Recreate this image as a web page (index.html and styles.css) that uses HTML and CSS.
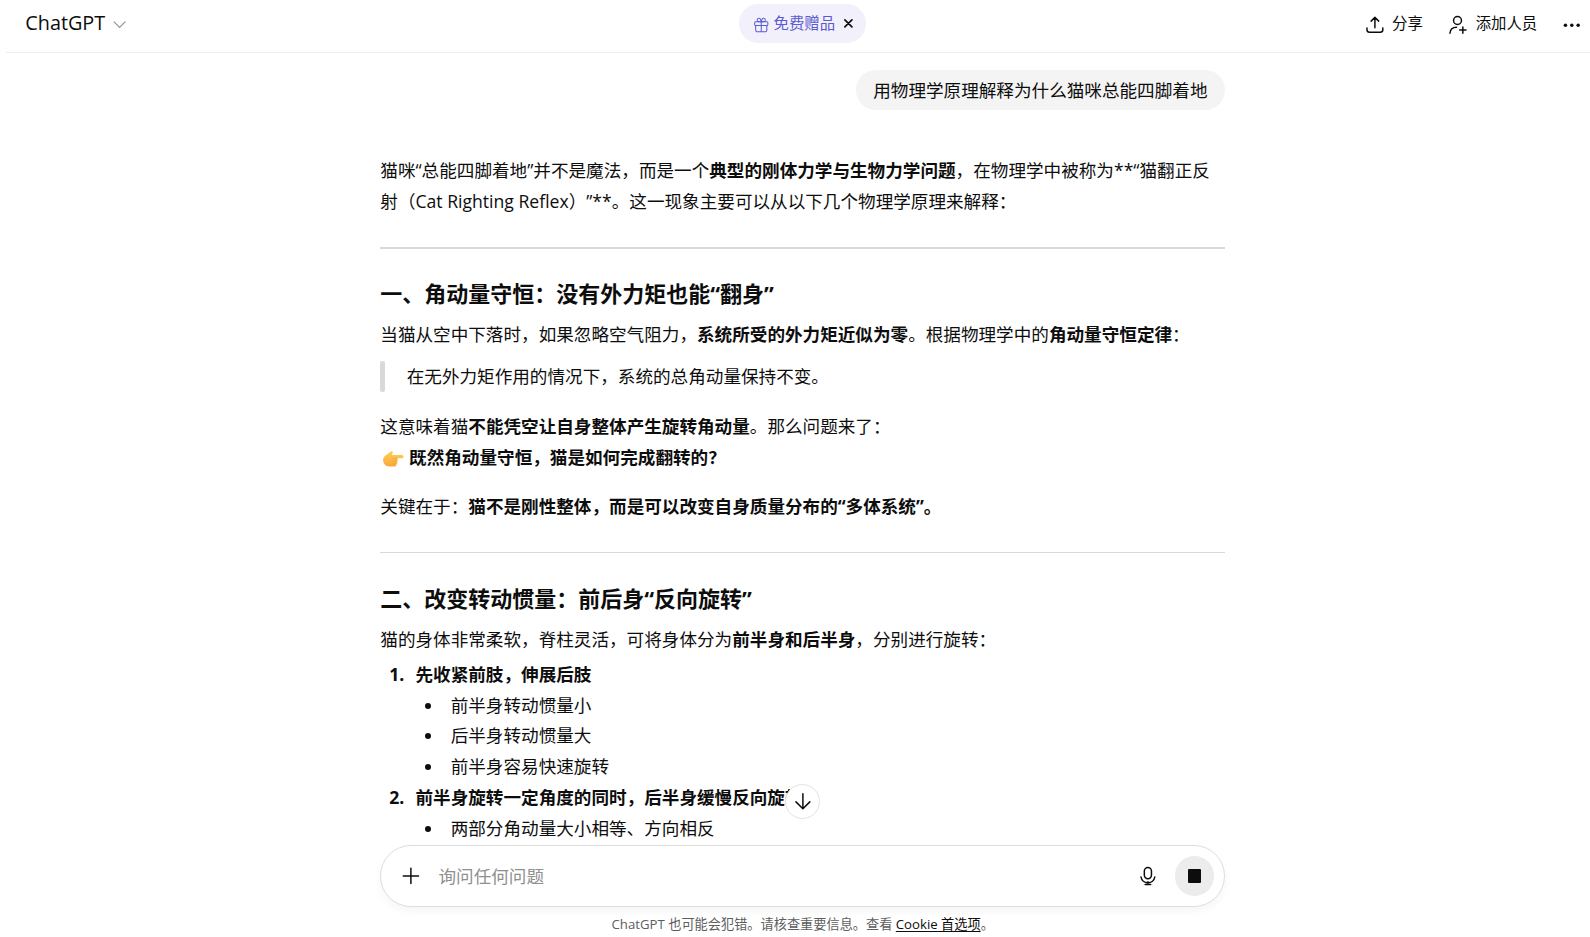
FILE: index.html
```html
<!DOCTYPE html>
<html lang="zh-CN">
<head>
<meta charset="utf-8">
<meta name="viewport" content="width=device-width, initial-scale=1">
<title>ChatGPT</title>
<link rel="stylesheet" href="styles.css">
</head>
<body>
<header class="topbar">
  <button class="model" type="button">ChatGPT
    <svg class="chevron" viewBox="0 0 12 12" aria-hidden="true"><path d="M1 3.500 6 8.500 11 3.500"/></svg>
  </button>
  <div class="gift">
    <button class="gift-link" type="button">
      <svg class="gift-icon" viewBox="0 0 16 16" aria-hidden="true"><rect x="1.600" y="4.600" width="12.800" height="3.600" rx="1"/><path d="M2.600 8.200v4.400a1.800 1.800 0 0 0 1.800 1.800h7.200a1.800 1.800 0 0 0 1.800-1.800V8.200M8 4.600v9.800M8 4.600H5.700a1.700 1.700 0 1 1 1.700-1.900L8 4.600l.6-1.900a1.700 1.700 0 1 1 1.700 1.900H8"/></svg>
      免费赠品
    </button>
    <button class="gift-close" type="button" aria-label="关闭"><svg viewBox="0 0 8 8" aria-hidden="true"><path d="M.8.8l6.400 6.400M7.200.8.8 7.200"/></svg></button>
  </div>
  <nav class="actions">
    <button class="action" type="button">
      <svg class="icon" viewBox="0 0 20 20" aria-hidden="true"><path d="M2 13v1.900a2.600 2.600 0 0 0 2.600 2.600h10.800a2.600 2.600 0 0 0 2.600-2.600V13M10 12.800V2.600M6.200 6.200 10 2.400l3.800 3.800"/></svg>
      分享
    </button>
    <button class="action" type="button">
      <svg class="icon" viewBox="0 0 20 20" aria-hidden="true"><circle cx="9.600" cy="5.600" r="4"/><path d="M2 18.400c.3-4 2.800-6 6.600-6M15 12v6.400M11.800 15.200h6.400"/></svg>
      添加人员
    </button>
    <button class="more" type="button" aria-label="更多"><svg viewBox="0 0 16 4" aria-hidden="true"><circle cx="2.200" cy="2" r="1.600"/><circle cx="8" cy="2" r="1.600"/><circle cx="13.800" cy="2" r="1.600"/></svg></button>
  </nav>
</header>

<main class="thread">
  <div class="column">
    <p class="bubble">用物理学原理解释为什么猫咪总能四脚着地</p>
    <article class="answer">
      <p>猫咪“总能四脚着地”并不是魔法，而是一个<strong>典型的刚体力学与生物力学问题</strong>，在物理学中被称为**“猫翻正反射（Cat Righting Reflex）”**。这一现象主要可以从以下几个物理学原理来解释：</p>
      <hr>
      <h2>一、角动量守恒：没有外力矩也能“翻身”</h2>
      <p>当猫从空中下落时，如果忽略空气阻力，<strong>系统所受的外力矩近似为零</strong>。根据物理学中的<strong>角动量守恒定律</strong>：</p>
      <blockquote>在无外力矩作用的情况下，系统的总角动量保持不变。</blockquote>
      <p>这意味着猫<strong>不能凭空让自身整体产生旋转角动量</strong>。那么问题来了：<br>
        <svg class="hand" viewBox="0 0 20 20" role="img" aria-label="指向右"><defs><linearGradient id="skin" x1="0" y1="0" x2="0" y2="1"><stop offset="0" stop-color="#ffd052"/><stop offset="1" stop-color="#f9a83a"/></linearGradient></defs><path fill="url(#skin)" d="M1 11c0-2.600 1.500-3.900 3.500-5L8 3.200c1.200-.9 2.400.2 1.700 1.400L8.800 6.300h9.300c1.900 0 1.900 3 0 3h-4.600c1.500.5 1.300 2.400 0 2.700 1 .7.700 2.300-.6 2.500.6 1-.1 2.300-1.400 2.300H6.400C3.200 16.800 1 14.400 1 11z"/><path fill="none" stroke="#f09a35" stroke-width=".6" stroke-linecap="round" d="M13.400 9.400H9.800M13.300 12H9.900M12.700 14.500H9.900"/></svg>
        <strong>既然角动量守恒，猫是如何完成翻转的？</strong></p>
      <p>关键在于：<strong>猫不是刚性整体，而是可以改变自身质量分布的“多体系统”。</strong></p>
      <hr>
      <h2>二、改变转动惯量：前后身“反向旋转”</h2>
      <p>猫的身体非常柔软，脊柱灵活，可将身体分为<strong>前半身和后半身</strong>，分别进行旋转：</p>
      <ol>
        <li><strong>先收紧前肢，伸展后肢</strong>
          <ul>
            <li>前半身转动惯量小</li>
            <li>后半身转动惯量大</li>
            <li>前半身容易快速旋转</li>
          </ul>
        </li>
        <li><strong>前半身旋转一定角度的同时，后半身缓慢反向旋转</strong>
          <ul>
            <li>两部分角动量大小相等、方向相反</li>
          </ul>
        </li>
      </ol>
    </article>
  </div>
</main>

<footer class="dock">
  <div class="column">
    <button class="scroll-down" type="button" aria-label="滚动到底部"><svg class="icon" viewBox="0 0 20 20" aria-hidden="true"><path d="M10 1.800v15M3 10l7 7 7-7"/></svg></button>
    <form class="composer">
      <button class="tool" type="button" aria-label="添加"><svg class="icon" viewBox="0 0 20 20" aria-hidden="true"><path d="M10 2.300v15.400M2.300 10h15.400"/></svg></button>
      <input class="prompt" type="text" placeholder="询问任何问题" aria-label="询问任何问题">
      <button class="tool" type="button" aria-label="听写"><svg class="icon" viewBox="0 0 20 20" aria-hidden="true"><rect x="6.400" y="1.400" width="7.200" height="11.400" rx="3.600"/><path d="M3 11a7.100 7.100 0 0 0 14 0M10 16v2.500M7.200 18.700h5.600"/></svg></button>
      <button class="stop" type="button" aria-label="停止"><span class="square"></span></button>
    </form>
    <p class="note">ChatGPT 也可能会犯错。请核查重要信息。查看 <a href="#cookies">Cookie 首选项</a>。</p>
  </div>
</footer>
</body>
</html>
```
FILE: styles.css
```css
* {
  box-sizing: border-box;
}

html {
  height: 100%;
}

body {
  zoom: 1.1;
  display: flex;
  flex-direction: column;
  height: 100%;
  margin: 0;
  overflow: hidden;
  background: #fff;
  color: #0d0d0d;
  font: 16px/28px "Open Sans", "Noto Sans CJK SC", sans-serif;
  text-spacing-trim: space-all;
}

button {
  display: flex;
  align-items: center;
  padding: 0;
  border: 0;
  background: none;
  color: inherit;
  font: inherit;
}

svg {
  flex: none;
  fill: none;
  stroke: currentColor;
  stroke-linecap: round;
  stroke-linejoin: round;
}

.icon {
  width: 18px;
  height: 18px;
  stroke-width: 1.5;
}

/* Top bar */
.topbar {
  flex: none;
  display: grid;
  grid-template-columns: 1fr auto 1fr;
  align-items: center;
  height: 48px;
  margin-left: 5px;
  padding: 0 9px 4px 18px;
  border-bottom: 1px solid #ededed;
}

.model {
  gap: 7px;
  font-size: 18px;
}

.chevron {
  width: 12px;
  height: 12px;
  margin-top: 2px;
  color: #8f8f8f;
}

.gift {
  display: flex;
  align-items: center;
  gap: 8px;
  height: 35px;
  padding: 0 12px;
  border-radius: 18px;
  background: #f1f0fb;
}

.gift-link {
  gap: 4px;
  padding-top: 2px;
  color: #5d5bd0;
  font-size: 14px;
}

.gift-icon {
  width: 15px;
  height: 15px;
}

.gift-close svg {
  width: 8px;
  height: 8px;
  stroke: #0d0d0d;
  stroke-width: 1.5;
}

.actions {
  display: flex;
  justify-content: flex-end;
  align-items: center;
  gap: 23px;
  padding-top: 2px;
  font-size: 14px;
}

.action {
  gap: 7px;
}

.more svg {
  width: 16px;
  height: 4px;
  fill: #0d0d0d;
  stroke: none;
}

/* Conversation */
.thread {
  flex: 1;
  min-height: 0;
  overflow: hidden;
}

.thread,
.dock {
  padding-left: 14px;
}

.column {
  position: relative;
  display: flex;
  flex-direction: column;
  max-width: 768px;
  margin: 0 auto;
}

.bubble {
  align-self: flex-end;
  margin: 16px 0 41px;
  padding: 6px 16px;
  border-radius: 18px;
  background: #f4f4f4;
  line-height: 24px;
}

.answer p {
  margin: 0 0 16px;
}

.answer strong {
  font-weight: 700;
}

.answer hr {
  height: 1px;
  margin: 28px 0 27px;
  border: 0;
  background: #d9d9d9;
}

.answer h2 {
  margin: 0 0 9px;
  font-size: 20px;
  font-weight: 700;
  line-height: 28px;
}

.answer h2 + p {
  margin-bottom: 4px;
}

.answer blockquote {
  position: relative;
  margin: 10px 0 18px;
  padding-left: 24px;
}

.answer blockquote::before {
  content: "";
  position: absolute;
  inset: 0 auto 0 0;
  width: 4px;
  border-radius: 2px;
  background: #d9d9d9;
}

.answer ol,
.answer ul {
  margin: 0;
  padding-left: 26px;
}

.answer ul {
  list-style: disc;
}

.answer li {
  padding-left: 6px;
}

.answer ol > li::marker {
  font-weight: 700;
}

.answer ul > li::marker {
  font-weight: 400;
}

.hand {
  width: 20px;
  height: 20px;
  margin-left: 2px;
  vertical-align: -5px;
  stroke: none;
}

/* Composer */
.dock {
  flex: none;
}

.scroll-down {
  position: absolute;
  bottom: 100%;
  left: 50%;
  justify-content: center;
  width: 32px;
  height: 32px;
  margin: 0 0 23px -16px;
  border: 1px solid #e3e3e3;
  border-radius: 50%;
  background: #fff;
}

.composer {
  display: flex;
  align-items: center;
  height: 57px;
  padding: 0 9px 0 18px;
  border: 1px solid #dedede;
  border-radius: 29px;
  background: #fff;
  box-shadow: 0 4px 8px #0000000a;
}

.prompt {
  flex: 1;
  min-width: 0;
  margin: 0 12px 0 16px;
  padding: 0;
  border: 0;
  outline: 0;
  background: none;
  color: inherit;
  font: inherit;
}

.prompt::placeholder {
  color: #8f8f8f;
  opacity: 1;
}

.stop {
  justify-content: center;
  width: 36px;
  height: 36px;
  margin-left: 15px;
  border-radius: 50%;
  background: #ececec;
}

.square {
  width: 12px;
  height: 12px;
  border-radius: 1px;
  background: #0d0d0d;
}

.note {
  margin: 8px 0 3px;
  color: #5d5d5d;
  font-size: 12px;
  line-height: 16px;
  text-align: center;
}

.note a {
  color: #0d0d0d;
  text-underline-offset: 2px;
}
```
